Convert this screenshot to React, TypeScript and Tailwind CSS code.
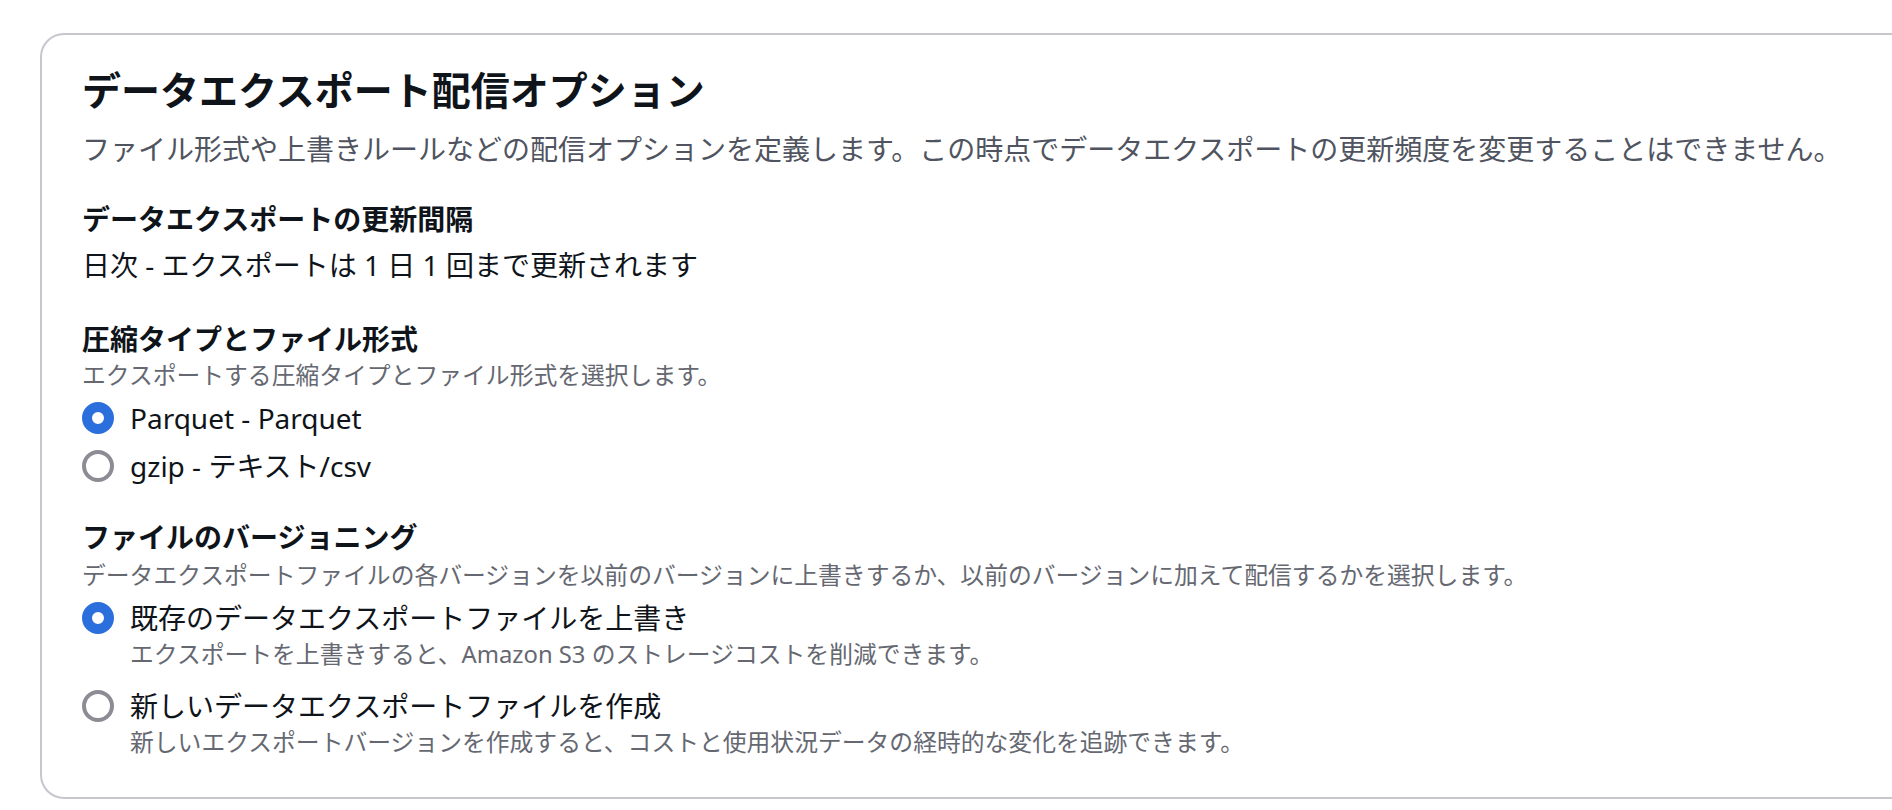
const font = { fontFamily: '"Noto Sans", "Noto Sans CJK JP", sans-serif' };

function Radio({ checked }: { checked: boolean }) {
  return checked ? (
    <span className="mt-[4px] block h-8 w-8 shrink-0 rounded-full border-[10px] border-[#2b6fdc] bg-white" />
  ) : (
    <span className="mt-[4px] block h-8 w-8 shrink-0 rounded-full border-4 border-[#8c8c94] bg-white" />
  );
}

function Option({ checked, label, hint }: { checked: boolean; label: string; hint?: string }) {
  return (
    <div className="flex items-start gap-4">
      <Radio checked={checked} />
      <div>
        <p className="text-[28px] leading-[40px] text-[#0f141a]">{label}</p>
        {hint && <p className="text-[23.8px] leading-[32px] text-[#656871]">{hint}</p>}
      </div>
    </div>
  );
}

export default function App() {
  return (
    <div className="h-[810px] w-full overflow-hidden bg-white" style={font}>
      <div className="ml-[40px] mt-[33px] w-[1900px] rounded-[24px] border-2 border-[#c6c6cd] pl-[40px] pt-[31px] pb-[39px]">
        {/* Header */}
        <h2 className="text-[39px] font-bold leading-[48px] text-[#0f141a]">データエクスポート配信オプション</h2>
        <p className="mt-[15px] text-[28px] leading-[40px] text-[#4f5460]">
          ファイル形式や上書きルールなどの配信オプションを定義します。この時点でデータエクスポートの更新頻度を変更することはできません。
        </p>

        {/* Refresh interval */}
        <section className="mt-[30px]">
          <h3 className="text-[28px] font-bold leading-[40px] text-[#0f141a]">データエクスポートの更新間隔</h3>
          <p className="mt-[6px] text-[28px] leading-[40px] text-[#0f141a]">日次 - エクスポートは 1 日 1 回まで更新されます</p>
        </section>

        {/* Compression */}
        <section className="mt-[34px]">
          <h3 className="text-[28px] font-bold leading-[40px] text-[#0f141a]">圧縮タイプとファイル形式</h3>
          <p className="text-[23.8px] leading-[32px] text-[#656871]">エクスポートする圧縮タイプとファイル形式を選択します。</p>
          <div className="mt-[7px] flex flex-col gap-2">
            <Option checked label="Parquet - Parquet" />
            <Option checked={false} label="gzip - テキスト/csv" />
          </div>
        </section>

        {/* Versioning */}
        <section className="mt-[31px]">
          <h3 className="text-[28px] font-bold leading-[40px] text-[#0f141a]">ファイルのバージョニング</h3>
          <p className="mt-[2px] text-[23.8px] leading-[32px] text-[#656871]">
            データエクスポートファイルの各バージョンを以前のバージョンに上書きするか、以前のバージョンに加えて配信するかを選択します。
          </p>
          <div className="mt-[7px] flex flex-col gap-4">
            <Option
              checked
              label="既存のデータエクスポートファイルを上書き"
              hint="エクスポートを上書きすると、Amazon S3 のストレージコストを削減できます。"
            />
            <Option
              checked={false}
              label="新しいデータエクスポートファイルを作成"
              hint="新しいエクスポートバージョンを作成すると、コストと使用状況データの経時的な変化を追跡できます。"
            />
          </div>
        </section>
      </div>
    </div>
  );
}
